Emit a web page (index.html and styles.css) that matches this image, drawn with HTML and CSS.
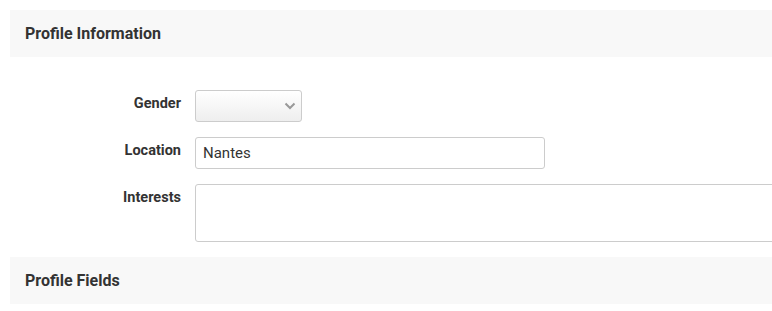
FILE: index.html
```html
<!DOCTYPE html>
<html lang="en">
  <head>
    <meta charset="UTF-8" />
    <title>Profile</title>
    <link rel="stylesheet" href="styles.css">
  </head>
  <body>
    <div class="page">
      <!-- Profile information -->
      <h2 class="section-title">Profile Information</h2>
      <div class="profile-form">
        <label class="field-label">Gender</label>
        <div class="select-box">
          <svg class="chevron" width="12" height="8" viewBox="0 0 12 8">
            <path d="M1.5 1.5 L6 6 L10.5 1.5" fill="none" stroke="#999" stroke-width="2" />
          </svg>
        </div>

        <label class="field-label">Location</label>
        <input class="text-input" type="text" value="Nantes" />

        <label class="field-label">Interests</label>
        <textarea class="text-area"></textarea>
      </div>

      <!-- Profile fields -->
      <h2 class="section-title">Profile Fields</h2>
    </div>
  </body>
</html>
```

FILE: styles.css
```css
* {
  margin: 0;
  padding: 0;
  box-sizing: border-box;
}
html,
body {
  overflow: hidden;
}
body {
  background-color: #fff;
  font-family: Roboto, "Liberation Sans", sans-serif;
  color: #333;
}
.page {
  width: 1000px;
  padding: 10px 0 0 10px;
}
.section-title {
  height: 47px;
  padding-left: 15px;
  display: flex;
  align-items: center;
  background-color: #f8f8f8;
  font-size: 16px;
  font-weight: 700;
  color: #333;
}
.profile-form {
  display: grid;
  grid-template-columns: 171px 1fr;
  column-gap: 14px;
  row-gap: 15px;
  padding: 33px 0 15px;
  align-items: start;
}
.field-label {
  text-align: right;
  font-size: 14.5px;
  font-weight: 700;
  color: #333;
  padding-top: 5px;
}
.select-box {
  width: 107px;
  height: 32px;
  border: 1px solid #ccc;
  border-radius: 3px;
  background: linear-gradient(#fff, #eeeeee);
  display: flex;
  align-items: center;
  justify-content: flex-end;
  padding-right: 5px;
}
.text-input {
  width: 350px;
  height: 32px;
  border: 1px solid #ccc;
  border-radius: 3px;
  padding: 0 7px;
  font-family: Roboto, "Liberation Sans", sans-serif;
  font-size: 15px;
  color: #333;
  outline: none;
}
.text-area {
  width: 700px;
  height: 58px;
  border: 1px solid #ccc;
  border-radius: 3px;
  resize: none;
  outline: none;
}
```
